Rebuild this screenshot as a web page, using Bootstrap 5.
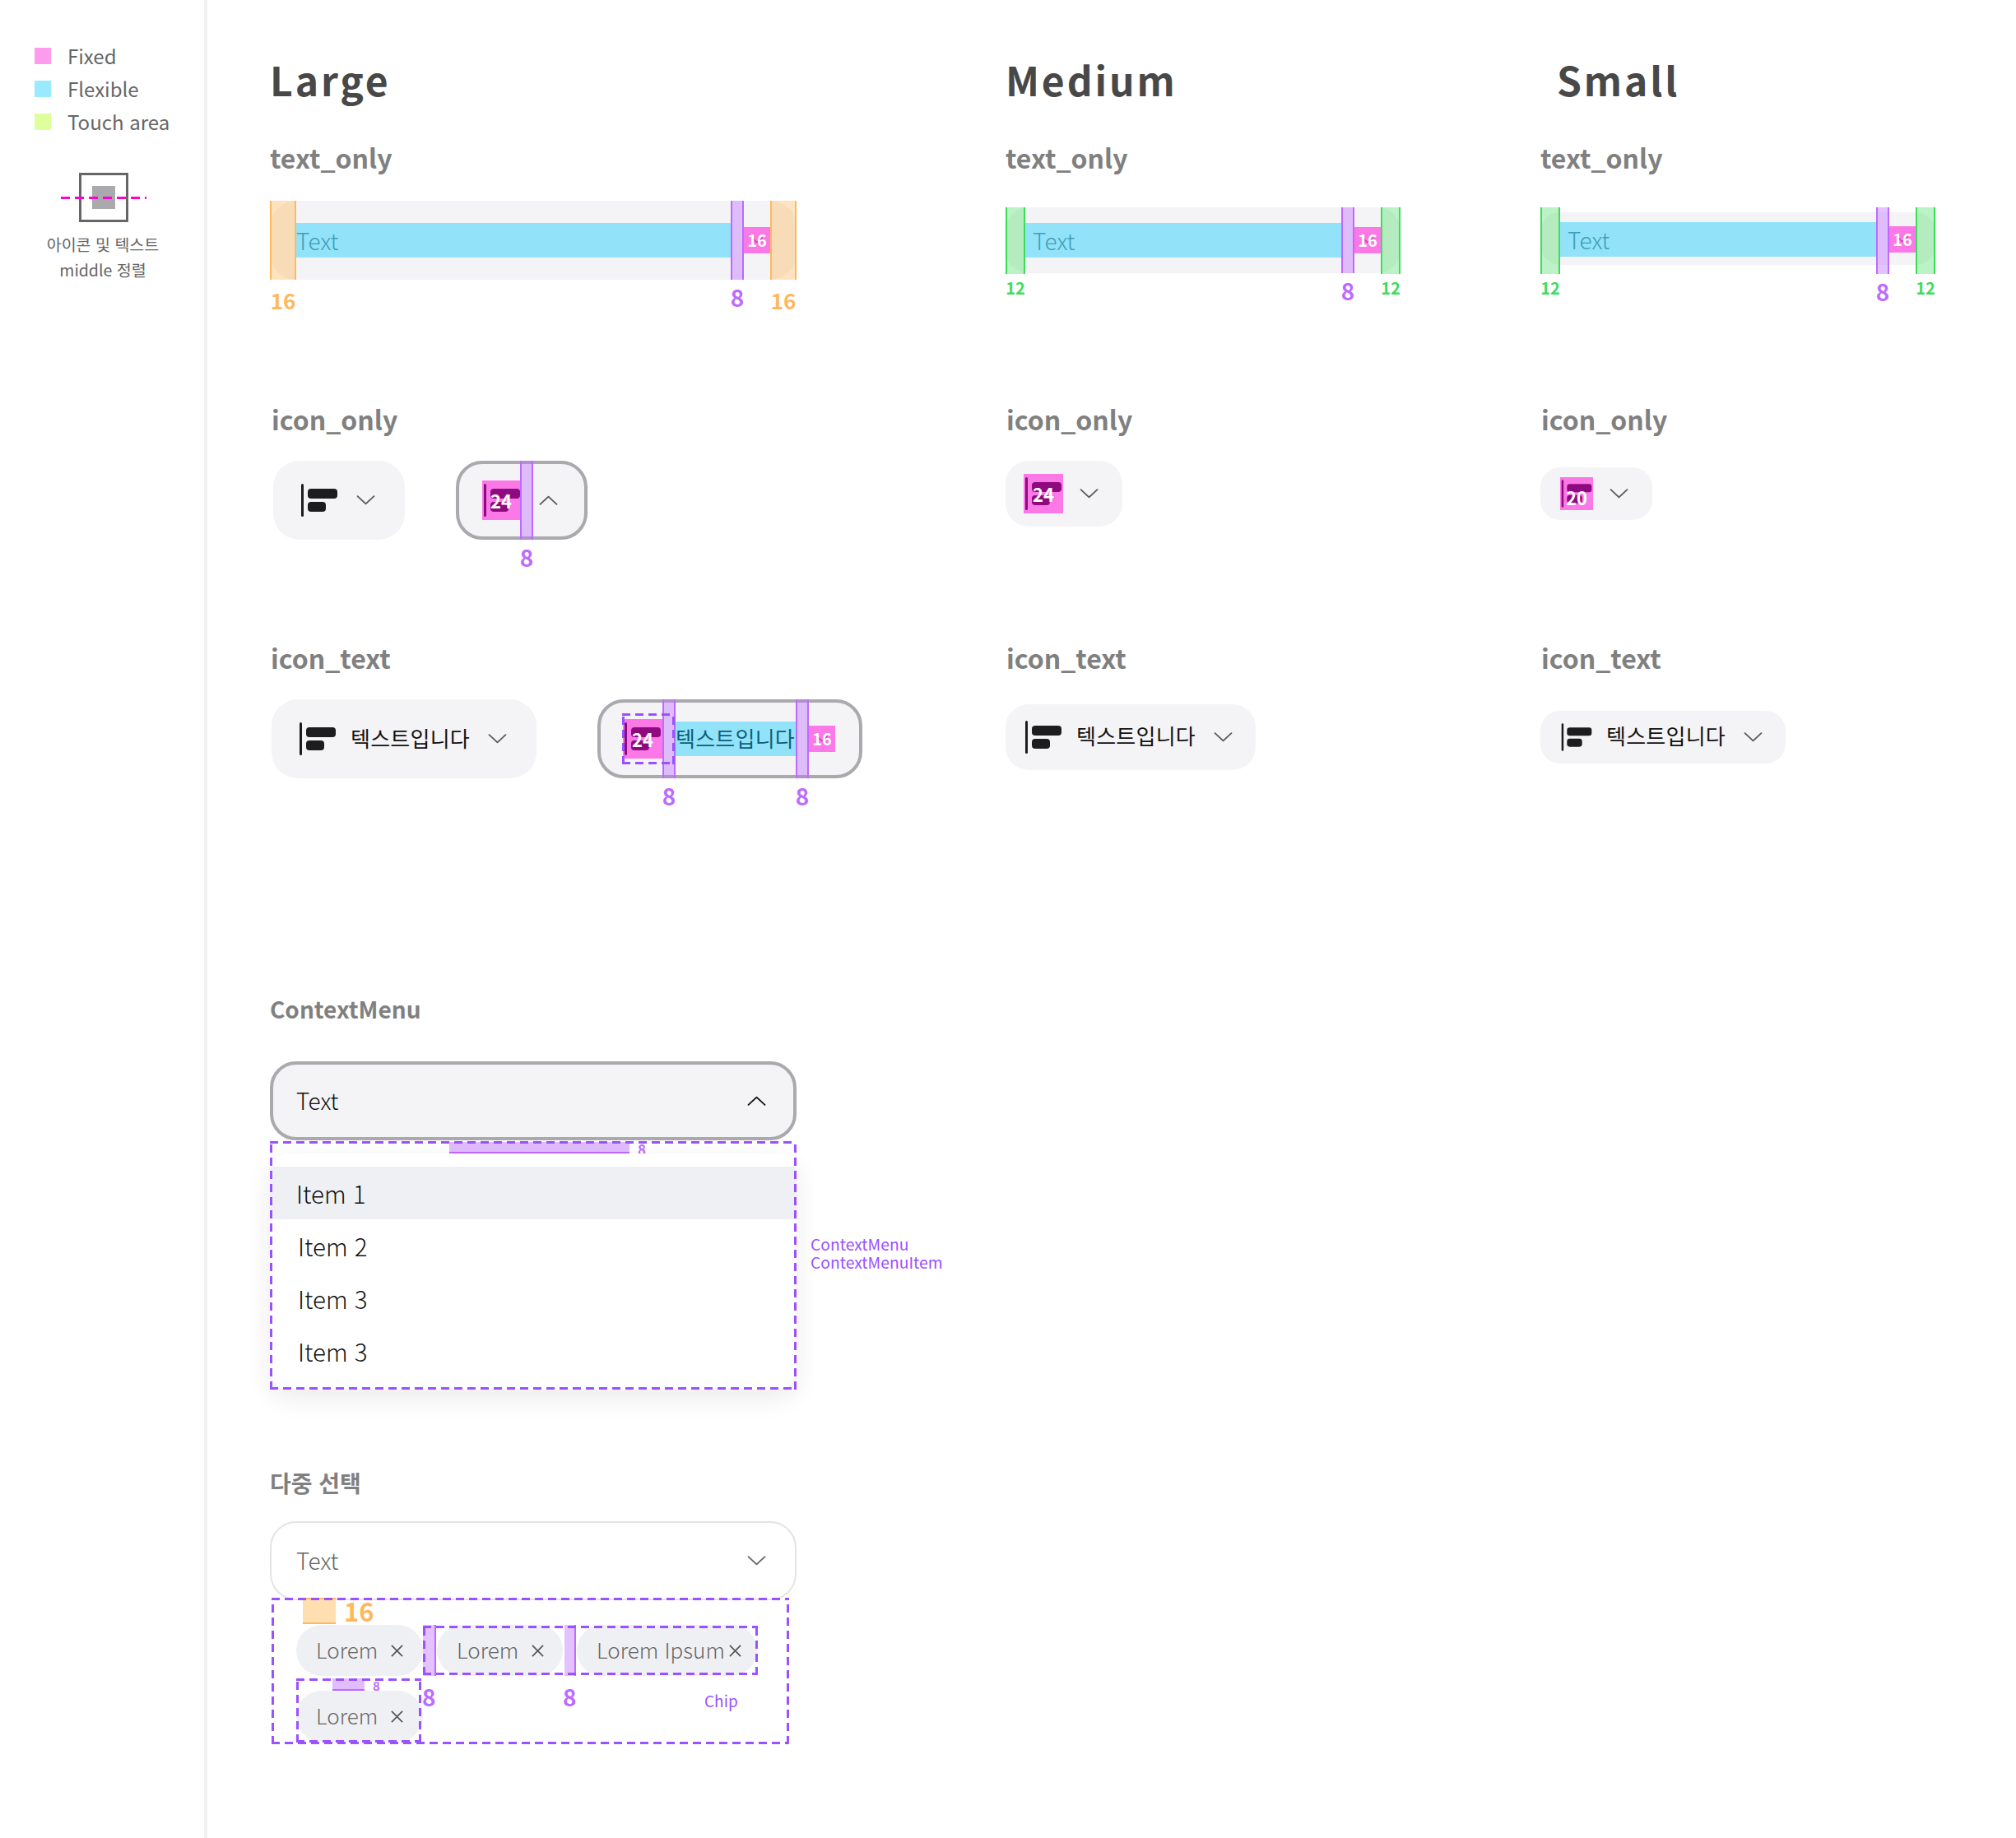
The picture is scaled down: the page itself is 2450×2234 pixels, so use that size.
<!DOCTYPE html>
<html lang="ko">
<head>
<meta charset="utf-8">
<title>Dropdown spec</title>
<link href="https://cdn.jsdelivr.net/npm/bootstrap@5.3.0/dist/css/bootstrap.min.css" rel="stylesheet">
<style>
html,body{background:#fff;margin:0}
body{font-family:"Noto Sans CJK KR","Noto Sans",sans-serif;min-height:2234px;color:#666;font-weight:300}
.side{width:252px;flex:none;border-right:4px solid #f1f1f2;padding-top:48px}
.leg-row{height:40px;padding-left:42px;font-size:24px;line-height:40px;color:#666;font-weight:400}
.leg-sw{width:20px;height:20px;margin-right:20px;margin-top:-1px}
.sw-pk{background:#fd9bec}.sw-bl{background:#99e9ff}.sw-gn{background:#ddff9c}
.demo{width:60px;height:60px;border:3px solid #666;margin:42px 0 0 96px;position:relative}
.demo-in{width:28px;height:28px;background:#a9a9ae}
.demo-line{position:absolute;left:-25px;top:26px;width:104px;height:3px}
.cap{font-size:19.5px;line-height:31px;color:#666;text-align:center;margin-top:11px;width:250px;font-weight:400}
.stage{flex:1;padding-left:76px}
.sizes{display:grid;grid-template-columns:894px 650px 1fr;grid-template-rows:170px 318px 290px 431px}
.ttl{font-size:48px;font-weight:700;letter-spacing:2.9px;color:#484848;line-height:60px;margin:66px 0 0;}
.lbl{font-size:32px;font-weight:700;line-height:42px;height:48px;color:#808080;margin:0}
.ml-1px{margin-left:1px}.ml-2px{margin-left:2px}.ml-21{margin-left:20px}
.gap-26{margin-bottom:26px}.gap-34{margin-bottom:34px}.gap-24{margin-bottom:24px}.gap-40{margin-bottom:40px}.gap-32{margin-bottom:32px}.gap-30{margin-bottom:30px}.gap-38{margin-bottom:38px}
.dd{display:flex;align-items:center;background:#f4f4f6;color:#111;font-size:28px;line-height:1}
.h96{height:96px;border-radius:32px}.h80{height:80px;border-radius:28px}.h64{height:64px;border-radius:24px}
.nudge{padding-top:2px}
.act{border:4px solid #a9a9ae}
.seg{position:relative;flex:none;align-self:stretch}
.s-or{width:32px;background:rgba(255,184,92,.4);border:solid #ffb85c;border-width:0 2px}
.s-gr{width:24px;background:rgba(61,220,91,.35);border:solid #3ddc5b;border-width:0 2px;margin-bottom:-1px}
.tall{margin-top:-8px;margin-bottom:-11px}
.s-pu{width:16px;background:rgba(190,110,255,.42);border:solid #bd6bff;border-width:0 2px}
.out4{margin-top:-4px;margin-bottom:-4px}
.s-bl{flex:1;height:42px;background:#92e3fa;color:#3f9db5;display:flex;align-items:center}
.s-bl.fix{flex:none;width:146px;color:#0d5e78;font-size:26px}
.s-pk{position:relative;flex:none;width:32px;height:32px;background:#fb78e7;display:flex;align-items:center;justify-content:center}
.s-pk svg{color:#c0309f}
.num{position:absolute;inset:0;display:flex;align-items:center;justify-content:center;color:#fff;font-weight:700;font-size:20px;line-height:1}
.num-lg{font-size:22px}
.num-low{padding-top:8px}
.ic-bx{position:relative;flex:none;color:#8f0a7f;background:#fb78e7;overflow:hidden}
.w46{width:46px;height:48px}.w48{width:48px;height:48px}.w40{width:40px;height:40px}
.ic-plain{flex:none;color:#1d1d1f;display:block}
.chev{flex:none;width:32px;display:flex;justify-content:center;color:#5a5a5a}
.ko-tx{flex:none;width:144px;font-size:26px;white-space:nowrap;letter-spacing:.25px;margin-top:-3px;font-weight:400}
.ko-up{margin-top:-5px}
.pl-32{padding-left:32px}.pl-28{padding-left:28px}.pl-22{padding-left:22px}.pl-24{padding-left:24px}.pl-27{padding-left:27px}
.ml-16{margin-left:16px}.ml-18{margin-left:18px}.ml-15{margin-left:15px}.ml-2{margin-left:2px}
.w160{width:160px}.w142{width:142px}.w136{width:136px}.w322{width:322px}.w304{width:304px}.w298{width:298px}.w640{width:640px}.w480{width:480px}
.m-lbl{position:absolute;left:-6px;right:-6px;text-align:center;line-height:30px;font-weight:700}
.m-or{color:#ffb85c;font-size:26px;top:calc(100% + 10px)}
.m-pu{color:#bd6bff;font-size:28px;top:calc(100% + 6px)}
.m-gr{color:#3ddc5b;font-size:20px;top:calc(100% + 2px)}
.tx-b{padding-left:9px}
.btn-row{gap:62px}
.row-it{gap:74px;margin-left:2px}
.sub{font-size:28px;font-weight:700;line-height:34px;height:40px;color:#808080;margin:0 0 41px 0;}
.sel{display:flex;align-items:center;justify-content:space-between;height:96px;border-radius:32px;padding:0 33px 0 28px;background:#f4f4f6;color:#111;font-size:28px}
.sel span{margin-top:-2px}
.sel-off{background:#fff;border:2px solid #e4e4e8;color:#666;padding-left:30px;padding-right:35px}
.menu-wrap{position:relative;margin-top:1px;height:302px}
.dash,.dash-a,.icon-dash{position:absolute;pointer-events:none;z-index:3;background:
 repeating-linear-gradient(90deg,#9b51ff 0 10px,transparent 10px 16px) top left/100% 3px no-repeat,
 repeating-linear-gradient(90deg,#9b51ff 0 10px,transparent 10px 16px) bottom left/100% 3px no-repeat,
 repeating-linear-gradient(0deg,#9b51ff 0 10px,transparent 10px 16px) top left/3px 100% no-repeat,
 repeating-linear-gradient(0deg,#9b51ff 0 10px,transparent 10px 16px) top right/3px 100% no-repeat}
.dash{inset:0}
.dash-a{inset:1px -1px 1px 0}
.icon-dash{left:26px;top:13px;width:64px;height:62px}
.gap-row{height:15px;position:relative;display:flex;align-items:flex-start;padding-left:218px}
.gap-sw{background:#e1bdff;border-bottom:2px solid #bd6bff;height:14px;margin-top:1px}
.gw219{width:219px}.gw39{width:39px}
.gap-n{color:#bd6bff;font-size:17px;font-weight:700;line-height:15px;margin:2px 0 0 10px}
.menu-card{background:#fff;border-radius:24px;box-shadow:0 10px 30px rgba(30,30,50,.09);height:287px;padding-top:16px;overflow:hidden;position:relative}
.menu-card .list-group-item{height:64px;border:0;padding:0 0 0 34px;background:transparent;color:#111;font-size:29.5px;line-height:64px;display:block;font-weight:300}
.menu-card .list-group-item.hi{background:#eff0f4;padding-left:32px}
.annot{color:#9b51ff;font-size:19.3px;line-height:22px;margin:115px 0 0 17px;font-weight:400}
.sub2{margin-top:96px;margin-bottom:0}
.multi{margin-top:24px}
.chips{position:relative;z-index:2;margin:-3px 0 0 2px;width:629px;height:178px;padding-left:30px;}
.or-row{height:33px;display:flex;padding:0 0 0 8px}
.or-sw{width:40px;height:32px;background:#ffdfb0;border:solid #ffb85c;border-width:2px 0;}
.or-n{font-size:31px;font-weight:700;color:#ffb85c;margin-left:10px;line-height:32px}
.chip-r{display:flex;}
.chip{height:62px;border-radius:31px;background:#eff0f4;color:#666;font-size:26px;display:flex;align-items:center;padding-left:24px;flex:none;line-height:1}
.chip span{margin-top:-2px}
.c154{width:154px}.c153{width:153px}.c219{width:219px}
.chip svg{flex:none;color:#555}
.sp18{margin-left:16px}.sp7{margin-left:5px}
.chip-dsh{position:relative;display:flex;margin-left:0}
.gapv{width:16px;background:rgba(190,110,255,.42);border:solid #bd6bff;border-width:0 2px 0 0;flex:none;margin-right:1px}
.gapv2{margin-left:2px;margin-right:1px;width:14px}
.second{margin-top:3px}
.chip-cell{position:relative;width:152px;height:78px}
.sw-row{height:15px;display:flex;padding-left:44px;align-items:flex-start}
.sw-row .gap-sw{margin-top:0;height:15px}
.sw-row .gap-n{margin-left:10px;margin-top:2px;font-size:15px;line-height:13px}
.big8{color:#bd6bff;font-size:28px;line-height:30px;font-weight:700;margin-top:7px;width:16px;text-align:center;flex:none}
.chip-lbl{color:#9b51ff;font-size:19px;line-height:22px;margin-top:16px;flex:none;font-weight:400}
.m1{margin-left:1px}.m2{margin-left:155px}.m3{margin-left:156px}
</style>
</head>
<body class="d-flex">
<svg width="0" height="0" class="position-absolute">
<symbol id="glyph" viewBox="0 0 48 48"><rect x="2" y="4" width="3" height="40" rx="1.5" fill="currentColor"/><rect x="10" y="10" width="36" height="12" rx="4" fill="currentColor"/><rect x="10" y="26" width="22" height="12" rx="4" fill="currentColor"/></symbol>
<symbol id="dn" viewBox="0 0 24 13"><path d="M1.2 1.2 12 11.2 22.8 1.2" fill="none" stroke="currentColor" stroke-width="2" stroke-linecap="round" stroke-linejoin="round"/></symbol>
<symbol id="up" viewBox="0 0 24 13"><path d="M1.2 11.8 12 1.8 22.8 11.8" fill="none" stroke="currentColor" stroke-width="2" stroke-linecap="round" stroke-linejoin="round"/></symbol>
<symbol id="xx" viewBox="0 0 16 16"><path d="M1 1 15 15M15 1 1 15" fill="none" stroke="currentColor" stroke-width="1.8"/></symbol>
</svg>

<aside class="side">
  <div class="leg-row d-flex align-items-center"><span class="leg-sw sw-pk"></span>Fixed</div>
  <div class="leg-row d-flex align-items-center"><span class="leg-sw sw-bl"></span>Flexible</div>
  <div class="leg-row d-flex align-items-center"><span class="leg-sw sw-gn"></span>Touch area</div>
  <div class="demo d-flex align-items-center justify-content-center">
    <span class="demo-in"></span>
    <svg class="demo-line" viewBox="0 0 104 3"><line x1="0" y1="1.5" x2="104" y2="1.5" stroke="#ff00d4" stroke-width="3" stroke-dasharray="11 6"/></svg>
  </div>
  <div class="cap">아이콘 및 텍스트<br>middle 정렬</div>
</aside>

<main class="stage">
  <div class="sizes">
    <h2 class="ttl">Large</h2>
    <h2 class="ttl">Medium</h2>
    <h2 class="ttl ml-21">Small</h2>

    <section>
      <h3 class="lbl gap-26">text_only</h3>
      <div class="dd h96 w640">
        <div class="seg s-or"><span class="m-lbl m-or">16</span></div>
        <div class="s-bl">Text</div>
        <div class="seg s-pu"><span class="m-lbl m-pu">8</span></div>
        <div class="s-pk"><svg width="14" height="8"><use href="#dn"/></svg><span class="num">16</span></div>
        <div class="seg s-or"><span class="m-lbl m-or">16</span></div>
      </div>
    </section>
    <section>
      <h3 class="lbl gap-34">text_only</h3>
      <div class="dd h80 w480">
        <div class="seg s-gr"><span class="m-lbl m-gr">12</span></div>
        <div class="s-bl tx-b">Text</div>
        <div class="seg s-pu"><span class="m-lbl m-pu">8</span></div>
        <div class="s-pk"><svg width="14" height="8"><use href="#dn"/></svg><span class="num">16</span></div>
        <div class="seg s-gr"><span class="m-lbl m-gr">12</span></div>
      </div>
    </section>
    <section>
      <h3 class="lbl gap-40">text_only</h3>
      <div class="dd h64 w480 nudge">
        <div class="seg s-gr tall"><span class="m-lbl m-gr">12</span></div>
        <div class="s-bl tx-b">Text</div>
        <div class="seg s-pu tall"><span class="m-lbl m-pu">8</span></div>
        <div class="s-pk"><svg width="14" height="8"><use href="#dn"/></svg><span class="num">16</span></div>
        <div class="seg s-gr tall"><span class="m-lbl m-gr">12</span></div>
      </div>
    </section>

    <section>
      <h3 class="lbl ml-2px gap-24">icon_only</h3>
      <div class="d-flex btn-row ms-1">
        <div class="dd h96 w160 pl-32">
          <svg class="ic-plain" width="48" height="48"><use href="#glyph"/></svg>
          <span class="chev ml-16"><svg width="23" height="12"><use href="#dn"/></svg></span>
        </div>
        <div class="dd h96 w160 act pl-28">
          <div class="ic-bx w46"><svg width="48" height="48"><use href="#glyph"/></svg><span class="num num-lg">24</span></div>
          <div class="seg s-pu out4"><span class="m-lbl m-pu">8</span></div>
          <span class="chev ml-2"><svg width="23" height="12"><use href="#up"/></svg></span>
        </div>
      </div>
    </section>
    <section>
      <h3 class="lbl ml-1px gap-24">icon_only</h3>
      <div class="dd h80 w142 pl-22">
        <div class="ic-bx w48"><svg width="48" height="48"><use href="#glyph"/></svg><span class="num num-lg">24</span></div>
        <span class="chev ml-15"><svg width="23" height="12"><use href="#dn"/></svg></span>
      </div>
    </section>
    <section>
      <h3 class="lbl ml-1px gap-32">icon_only</h3>
      <div class="dd h64 w136 pl-24">
        <div class="ic-bx w40"><svg width="40" height="40"><use href="#glyph"/></svg><span class="num num-lg num-low">20</span></div>
        <span class="chev ml-15"><svg width="23" height="12"><use href="#dn"/></svg></span>
      </div>
    </section>

    <section>
      <h3 class="lbl ml-1px gap-24">icon_text</h3>
      <div class="d-flex row-it">
        <div class="dd h96 w322 pl-32">
          <svg class="ic-plain" width="48" height="48"><use href="#glyph"/></svg>
          <span class="ko-tx ml-16">텍스트입니다</span>
          <span class="chev ml-18"><svg width="23" height="12"><use href="#dn"/></svg></span>
        </div>
        <div class="dd h96 w322 act pl-27 position-relative">
          <div class="ic-bx w48"><svg width="48" height="48"><use href="#glyph"/></svg><span class="num num-lg">24</span></div>
          <div class="seg s-pu out4"><span class="m-lbl m-pu">8</span></div>
          <div class="s-bl fix"><span class="ko-tx">텍스트입니다</span></div>
          <div class="seg s-pu out4"><span class="m-lbl m-pu">8</span></div>
          <div class="s-pk"><svg width="14" height="8"><use href="#dn"/></svg><span class="num">16</span></div>
          <span class="icon-dash"></span>
        </div>
      </div>
    </section>
    <section>
      <h3 class="lbl ml-1px gap-30">icon_text</h3>
      <div class="dd h80 w304 pl-22">
        <svg class="ic-plain" width="48" height="48"><use href="#glyph"/></svg>
        <span class="ko-tx ko-up ml-16">텍스트입니다</span>
        <span class="chev ml-18"><svg width="23" height="12"><use href="#dn"/></svg></span>
      </div>
    </section>
    <section>
      <h3 class="lbl ml-1px gap-38">icon_text</h3>
      <div class="dd h64 w298 pl-24">
        <svg class="ic-plain" width="40" height="40"><use href="#glyph"/></svg>
        <span class="ko-tx ko-up ml-16">텍스트입니다</span>
        <span class="chev ml-18"><svg width="23" height="12"><use href="#dn"/></svg></span>
      </div>
    </section>
  </div>

  <section class="d-flex flex-column">
    <h3 class="sub">ContextMenu</h3>
    <div class="w640">
      <div class="sel act"><span>Text</span><svg width="23" height="12"><use href="#up"/></svg></div>
    </div>
    <div class="d-flex">
      <div class="menu-wrap w640">
        <div class="gap-row"><span class="gap-sw gw219"></span><span class="gap-n">8</span></div>
        <div class="menu-card">
          <div class="list-group list-group-flush rounded-0">
            <a class="list-group-item hi">Item 1</a>
            <a class="list-group-item">Item 2</a>
            <a class="list-group-item">Item 3</a>
            <a class="list-group-item">Item 3</a>
          </div>
        </div>
        <span class="dash"></span>
      </div>
      <div class="annot">ContextMenu<br>ContextMenuItem</div>
    </div>
  </section>

  <section>
    <h3 class="sub sub2">다중 선택</h3>
    <div class="multi w640">
      <div class="sel sel-off"><span>Text</span><svg width="23" height="12"><use href="#dn"/></svg></div>
      <div class="chips">
        <span class="dash"></span>
        <div class="or-row"><span class="or-sw"></span><span class="or-n">16</span></div>
        <div class="chip-r">
          <div class="chip c154"><span>Lorem</span><svg class="sp18" width="15" height="15"><use href="#xx"/></svg></div>
          <div class="chip-dsh">
            <span class="gapv"></span>
            <div class="chip c153"><span>Lorem</span><svg class="sp18" width="15" height="15"><use href="#xx"/></svg></div>
            <span class="gapv gapv2"></span>
            <div class="chip c219"><span>Lorem Ipsum</span><svg class="sp7" width="15" height="15"><use href="#xx"/></svg></div>
            <span class="dash-a"></span>
          </div>
        </div>
        <div class="chip-r second">
          <div class="chip-cell">
            <div class="sw-row"><span class="gap-sw gw39"></span><span class="gap-n">8</span></div>
            <div class="chip c154"><span>Lorem</span><svg class="sp18" width="15" height="15"><use href="#xx"/></svg></div>
            <span class="dash"></span>
          </div>
          <span class="big8 m1">8</span>
          <span class="big8 m2">8</span>
          <span class="chip-lbl m3">Chip</span>
        </div>
      </div>
    </div>
  </section>
</main>
</body>
</html>
